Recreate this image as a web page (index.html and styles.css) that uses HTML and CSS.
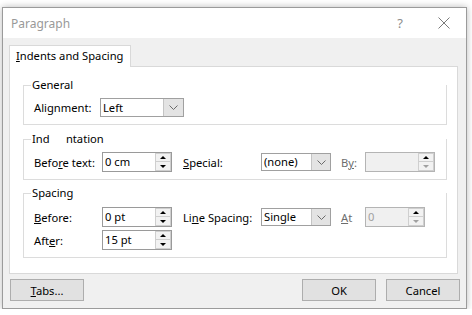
FILE: index.html
```html
<!DOCTYPE html>
<html>
<head>
<meta charset="utf-8">
<title>Paragraph</title>
<link rel="stylesheet" href="styles.css">
</head>
<body>
<div class="window">
  <div class="titlebar">
    <span class="title">Paragraph</span>
    <span class="help">?</span>
    <svg class="close" width="12" height="12" viewBox="0 0 12 12"><path d="M0.5 0.5 L11.5 11.5 M11.5 0.5 L0.5 11.5" stroke="#7a7a7a" stroke-width="1" fill="none"/></svg>
  </div>
  <div class="client">
    <div class="tabs"><div class="tab"><u>I</u>ndents and Spacing</div></div>
    <div class="panel">
      <div class="group">
        <div class="group-head"><span class="gtitle">General</span></div>
        <div class="row">
          <span class="lbl lbl-general">Ali<u>g</u>nment:</span>
          <div class="combo combo-wide"><span class="val">Left</span><span class="drop"><svg width="9" height="5" viewBox="0 0 9 5"><path d="M0.5 0.5 L4.5 4.5 L8.5 0.5" stroke="#6a6a6a" fill="none"/></svg></span></div>
        </div>
      </div>
      <div class="group g-indent">
        <div class="group-head"><span class="gtitle">Ind<span class="ghost">e</span>ntation</span></div>
        <div class="row">
          <span class="lbl">Befo<u>r</u>e text:</span>
          <div class="spin"><span class="val">0 cm</span><span class="sbtns"><span class="sb"><i class="up"></i></span><span class="sb"><i class="dn"></i></span></span></div>
          <span class="lbl2"><u>S</u>pecial:</span>
          <div class="combo"><span class="val">(none)</span><span class="drop"><svg width="9" height="5" viewBox="0 0 9 5"><path d="M0.5 0.5 L4.5 4.5 L8.5 0.5" stroke="#6a6a6a" fill="none"/></svg></span></div>
          <span class="lbl3 dis">B<u>y</u>:</span>
          <div class="spin spin-dis"><span class="val"></span><span class="sbtns"><span class="sb"><i class="up"></i></span><span class="sb"><i class="dn dn-dis"></i></span></span></div>
        </div>
      </div>
      <div class="group g-spacing">
        <div class="group-head"><span class="gtitle">Spacing</span></div>
        <div class="row row-first">
          <span class="lbl"><u>B</u>efore:</span>
          <div class="spin"><span class="val">0 pt</span><span class="sbtns"><span class="sb"><i class="up"></i></span><span class="sb"><i class="dn"></i></span></span></div>
          <span class="lbl2">Li<u>n</u>e Spacing:</span>
          <div class="combo"><span class="val">Single</span><span class="drop"><svg width="9" height="5" viewBox="0 0 9 5"><path d="M0.5 0.5 L4.5 4.5 L8.5 0.5" stroke="#6a6a6a" fill="none"/></svg></span></div>
          <span class="lbl3 dis"><u>A</u>t</span>
          <div class="spin spin-dis spin-short"><span class="val">0</span><span class="sbtns"><span class="sb"><i class="up"></i></span><span class="sb"><i class="dn dn-dis"></i></span></span></div>
        </div>
        <div class="row row-next">
          <span class="lbl">Aft<u>e</u>r:</span>
          <div class="spin"><span class="val">15 pt</span><span class="sbtns"><span class="sb"><i class="up"></i></span><span class="sb"><i class="dn"></i></span></span></div>
        </div>
      </div>
    </div>
    <div class="buttons">
      <button class="btn"><u>T</u>abs...</button>
      <button class="btn btn-ok">OK</button>
      <button class="btn btn-cancel">Cancel</button>
    </div>
  </div>
</div>
</body>
</html>
```
FILE: styles.css
```css
html, body {
  margin: 0;
  background: #ffffff;
}
body {
  padding: 7px 0 0 2px;
  font-family: "Segoe UI", "Noto Sans", sans-serif;
  font-size: 11.2px;
  color: #000;
}
u { text-decoration: underline; text-underline-offset: 1px; }
.window {
  width: 465px;
  height: 302px;
  box-sizing: border-box;
  border: 1px solid #9b9b9b;
  box-shadow: 0 0 7px rgba(0, 0, 0, 0.28);
  background: #f0f0f0;
  display: flex;
  flex-direction: column;
}
.titlebar {
  height: 30px;
  flex: none;
  background: #fff;
  display: flex;
  align-items: center;
  padding: 0 16px 0 8px;
}
.title {
  flex: 1;
  color: #999;
  font-size: 12px;
}
.help {
  color: #8c8c8c;
  font-size: 13px;
  margin-right: 35px;
}
.close { display: block; }
.client {
  flex: 1;
  padding: 7px 8px 0 6px;
  display: flex;
  flex-direction: column;
}
.tabs { display: flex; }
.tab {
  width: 122px;
  height: 22px;
  box-sizing: border-box;
  border: 1px solid #d9d9d9;
  border-bottom: none;
  background: #fff;
  padding-left: 6px;
  line-height: 19px;
  position: relative;
  z-index: 1;
  margin-bottom: -1px;
}
.panel {
  height: 208px;
  box-sizing: border-box;
  background: #fff;
  border: 1px solid #d9d9d9;
  padding: 18px 10px 0 13px;
  display: flex;
  flex-direction: column;
}
.group {
  display: flex;
  flex-direction: column;
  border: 1px solid #dcdcdc;
  border-top: none;
  padding-bottom: 7px;
}
.g-indent { margin-top: 14px; }
.g-spacing { margin-top: 13px; }
.group-head {
  display: flex;
  height: 14px;
  margin-top: -7px;
  align-items: center;
}
.group-head::before {
  content: "";
  align-self: flex-start;
  width: 7px;
  height: 8px;
  box-sizing: border-box;
  border-bottom: 1px solid #dcdcdc;
}
.gtitle {
  margin-left: 1px;
  line-height: 14px;
}
.ghost {
  color: transparent;
  padding: 0 5px;
}
.row {
  display: flex;
  align-items: center;
  padding-left: 10px;
  margin-top: 6px;
}
.row-first { margin-top: 7px; }
.row-next { margin-top: 3px; }
.lbl { width: 68px; flex: none; }
.lbl-general { width: 66px; }
.lbl2 { width: 78px; margin-left: 11px; flex: none; }
.lbl3 { width: 24px; margin-left: 10px; flex: none; }
.dis { color: #6d6d6d; }
.combo {
  width: 70px;
  height: 18px;
  box-sizing: border-box;
  border: 1px solid #a0a0a0;
  background: #fff;
  display: flex;
  flex: none;
}
.combo-wide { width: 84px; height: 19px; }
.combo .val {
  flex: 1;
  padding-left: 2px;
  line-height: 16px;
}
.combo-wide .val { line-height: 17px; }
.drop {
  width: 18px;
  background: #e3e3e3;
  border-left: 1px solid #c4c4c4;
  display: flex;
  align-items: center;
  justify-content: center;
}
.combo-wide .drop { width: 19px; }
.drop svg { display: block; }
.spin {
  width: 70px;
  height: 20px;
  box-sizing: border-box;
  border: 1px solid #9a9a9a;
  background: #fff;
  display: flex;
  flex: none;
}
.spin .val {
  flex: 1;
  padding-left: 2px;
  line-height: 18px;
}
.spin-dis {
  background: #f0f0f0;
  border-color: #b4b4b4;
}
.spin-dis .val { color: #a0a0a0; }
.spin-short { width: 60px; }
.sbtns {
  width: 16px;
  display: flex;
  flex-direction: column;
  flex: none;
}
.sb {
  height: 9px;
  box-sizing: border-box;
  background: #f2f2f2;
  border: 1px solid #cfcfcf;
  display: flex;
  align-items: center;
  justify-content: center;
}
.sb + .sb { border-top: none; }
.up, .dn {
  width: 0;
  height: 0;
  border-left: 3px solid transparent;
  border-right: 3px solid transparent;
}
.up { border-bottom: 3px solid #000; }
.dn { border-top: 3px solid #000; }
.dn-dis { border-top-color: #a0a0a0; }
.buttons {
  display: flex;
  margin: 5px -2px 0 0;
  padding-left: 1px;
}
.btn {
  width: 74px;
  height: 22px;
  box-sizing: border-box;
  border: 1px solid #adadad;
  background: #e1e1e1;
  font-family: inherit;
  font-size: 11.2px;
  color: #000;
  padding: 0;
  margin: 0;
}
.btn-ok { margin-left: auto; }
.btn-cancel { margin-left: 10px; }
```
